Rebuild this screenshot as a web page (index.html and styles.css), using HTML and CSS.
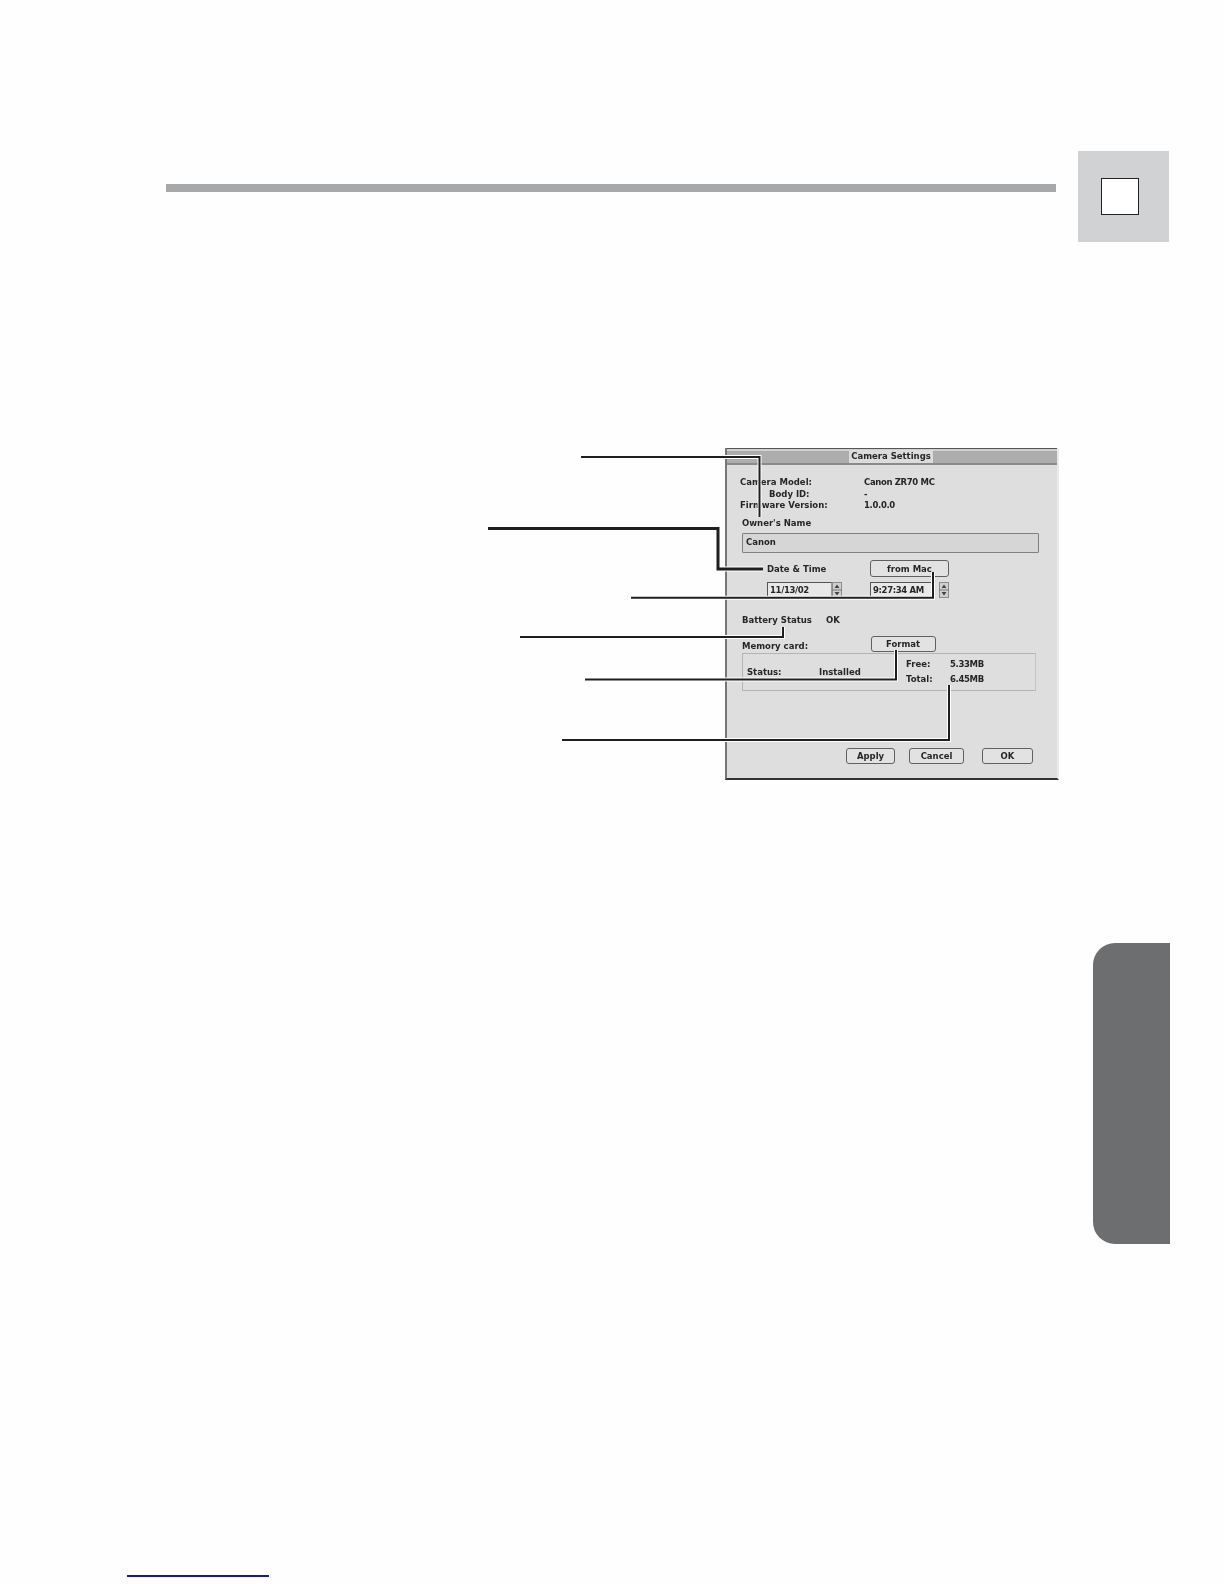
FILE: index.html
```html
<!DOCTYPE html>
<html lang="en">
<head>
<meta charset="utf-8">
<title>Camera Settings</title>
<link rel="stylesheet" href="styles.css">
</head>
<body>
<div class="page">
  <header class="head">
    <div class="rule"></div>
    <div class="chapter"><div class="chapter-box"></div></div>
  </header>

  <section class="dialog">
    <div class="titlebar"><span class="title">Camera Settings</span></div>
    <div class="info">
      <div class="info-row"><span class="lbl-model">Camera Model:</span><span class="tight">Canon ZR70 MC</span></div>
      <div class="info-row"><span class="lbl-body">Body ID:</span><span>-</span></div>
      <div class="info-row"><span class="lbl-firmware">Firmware Version:</span><span class="tight">1.0.0.0</span></div>
    </div>
    <div class="owner">Owner's Name</div>
    <div class="name-input">Canon</div>
    <div class="date-row">
      <span class="date-label">Date &amp; Time</span>
      <span class="btn btn-mac">from Mac</span>
    </div>
    <div class="fields">
      <span class="field tight">11/13/02</span>
      <svg class="stepper" viewBox="0 0 10 16"><rect class="step-bg" x=".5" y=".5" width="9" height="15"/><path class="step-line" d="M0 8h10"/><path class="step-arrow" d="M5 2.5 7.5 6h-5zM5 13.5 2.5 10h5z"/></svg>
      <span class="field field-time tight">9:27:34 AM</span>
      <svg class="stepper" viewBox="0 0 10 16"><rect class="step-bg" x=".5" y=".5" width="9" height="15"/><path class="step-line" d="M0 8h10"/><path class="step-arrow" d="M5 2.5 7.5 6h-5zM5 13.5 2.5 10h5z"/></svg>
    </div>
    <div class="battery"><span class="battery-label">Battery Status</span><span>OK</span></div>
    <div class="memory">
      <span class="memory-label">Memory card:</span>
      <span class="btn btn-format">Format</span>
    </div>
    <div class="group">
      <div class="status"><span class="status-label">Status:</span><span>Installed</span></div>
      <div class="sizes">
        <div class="size-row"><span class="size-label">Free:</span><span class="tight">5.33MB</span></div>
        <div class="size-row"><span class="size-label">Total:</span><span class="tight">6.45MB</span></div>
      </div>
    </div>
    <div class="actions">
      <span class="btn btn-apply">Apply</span>
      <span class="btn btn-cancel">Cancel</span>
      <span class="btn btn-ok">OK</span>
    </div>
  </section>

  <div class="side-tab"></div>
  <div class="foot-line"></div>

  <svg class="leaders" viewBox="0 0 1224 1584">
    <g class="halo">
      <path d="M581 457H759.5V517"/>
      <path class="thick" d="M488 528.5H718V569H763"/>
      <path d="M631 597.7H933V572"/>
      <path d="M520 637H783V627"/>
      <path d="M585 679.5H896V650"/>
      <path d="M562 740H949V685"/>
    </g>
    <g class="ink">
      <path d="M581 457H759.5V517"/>
      <path class="thick" d="M488 528.5H718V569H763"/>
      <path d="M631 597.7H933V572"/>
      <path d="M520 637H783V627"/>
      <path d="M585 679.5H896V650"/>
      <path d="M562 740H949V685"/>
    </g>
  </svg>
</div>
</body>
</html>
```
FILE: styles.css
```css
* { box-sizing: border-box; }
html, body { margin: 0; padding: 0; background: #fefefe; }
.page {
  position: relative;
  width: 1224px;
  height: 1584px;
  padding-top: 151px;
  overflow: hidden;
  font-family: "DejaVu Sans", sans-serif;
}
.head { display: flex; align-items: flex-start; gap: 22px; margin-left: 166px; }
.rule { width: 890px; height: 8px; margin-top: 33px; background: #a7a8aa; }
.chapter {
  width: 91px; height: 91px; background: #d0d2d3;
  display: flex; align-items: center;
  padding-left: 23px;
}
.chapter-box { width: 38px; height: 37px; background: #fff; border: 1.5px solid #222; }

.dialog {
  width: 334px; height: 332px;
  margin: 206px 0 0 725px;
  display: flex; flex-direction: column;
  background: #dedede;
  border-left: 2px solid #777;
  border-right: 2px solid #eaeaea;
  border-bottom: 2px solid #333;
  color: #262626;
  font-size: 8.5px; font-weight: 700; line-height: 12px;
  filter: blur(0.5px);
}
.tight { letter-spacing: -0.35px; }
.titlebar {
  height: 17px; flex: none;
  border-top: 1px solid #555;
  border-bottom: 2px solid #8a8a8a;
  background: linear-gradient(#d0d0d0 0 2px, #adadad 2px);
  display: flex; justify-content: center; align-items: center;
  padding-right: 2px;
}
.title { background: #dcdcdc; padding: 0 2px; line-height: 13px; }
.info { margin-top: 11px; padding-left: 10px; }
.info-row { display: grid; grid-template-columns: 127px auto; height: 11.7px; }
.lbl-model { padding-left: 3px; }
.lbl-body { padding-left: 32px; }
.lbl-firmware { padding-left: 3px; }
.owner { margin-top: 6px; padding-left: 15px; height: 12px; }
.name-input {
  margin: 4px 0 0 15px; width: 297px; height: 20px; flex: none;
  padding-left: 3px; line-height: 17px;
  background: #d6d6d6; border: 1.5px solid #808080; border-radius: 1px;
}
.date-row { display: flex; margin-top: 7px; padding-left: 40px; align-items: center; height: 17px; flex: none; }
.date-label { width: 103px; }
.btn {
  display: flex; align-items: center; justify-content: center;
  background: #e2e2e2; border: 1.5px solid #606060; border-radius: 3px;
}
.btn-mac { width: 79px; height: 17px; }
.fields { display: flex; margin: 5px 0 0 40px; height: 16px; flex: none; }
.field {
  width: 65px; height: 16px; padding-left: 2px; line-height: 14px;
  background: #e8e8e8; border: 1px solid #555; border-bottom-color: #bbb; border-right-color: #999;
}
.stepper { width: 10px; height: 16px; margin-left: 0; }
.step-bg { fill: #cfcfcf; stroke: #8c8c8c; stroke-width: 1; }
.step-line { stroke: #777; stroke-width: 1; }
.step-arrow { fill: #444; }
.field-time { width: 62px; margin-left: 28px; }
.fields .field-time + .stepper { margin-left: 7px; }
.battery { display: flex; margin-top: 16px; padding-left: 15px; height: 12px; flex: none; }
.battery-label { width: 84px; }
.memory { display: flex; margin-top: 10px; padding-left: 15px; height: 16px; flex: none; }
.memory-label { width: 128.5px; padding-top: 4px; }
.btn-format { width: 65px; height: 16px; }
.group {
  display: flex; align-items: center;
  margin: 1px 0 0 15px; width: 294px; height: 38px; flex: none;
  padding-left: 4px;
  border: 1px solid #b4b4b4; border-right-color: #c4c4c4;
}
.status { display: flex; width: 159px; }
.status-label { width: 72px; }
.size-row { display: flex; height: 15px; line-height: 15px; }
.size-label { width: 44px; }
.actions { display: flex; margin: 57px 0 0 119px; height: 16px; flex: none; }
.btn-apply { width: 49px; }
.btn-cancel { width: 55px; margin-left: 14px; }
.btn-ok { width: 51px; margin-left: 18px; }

.side-tab {
  width: 77px; height: 301px;
  margin: 163px 0 0 1093px;
  background: #6d6e70;
  border-radius: 22px 0 0 22px;
}
.foot-line { width: 142px; height: 1.5px; margin: 331px 0 0 127px; background: #1a1a8c; }

.leaders { position: absolute; left: 0; top: 0; width: 1224px; height: 1584px; pointer-events: none; }
.leaders path { fill: none; }
.halo path { stroke: #fff; stroke-width: 4px; }
.halo .thick { stroke-width: 5px; }
.ink path { stroke: #1f1f1f; stroke-width: 2px; }
.ink .thick { stroke-width: 3px; }
```
